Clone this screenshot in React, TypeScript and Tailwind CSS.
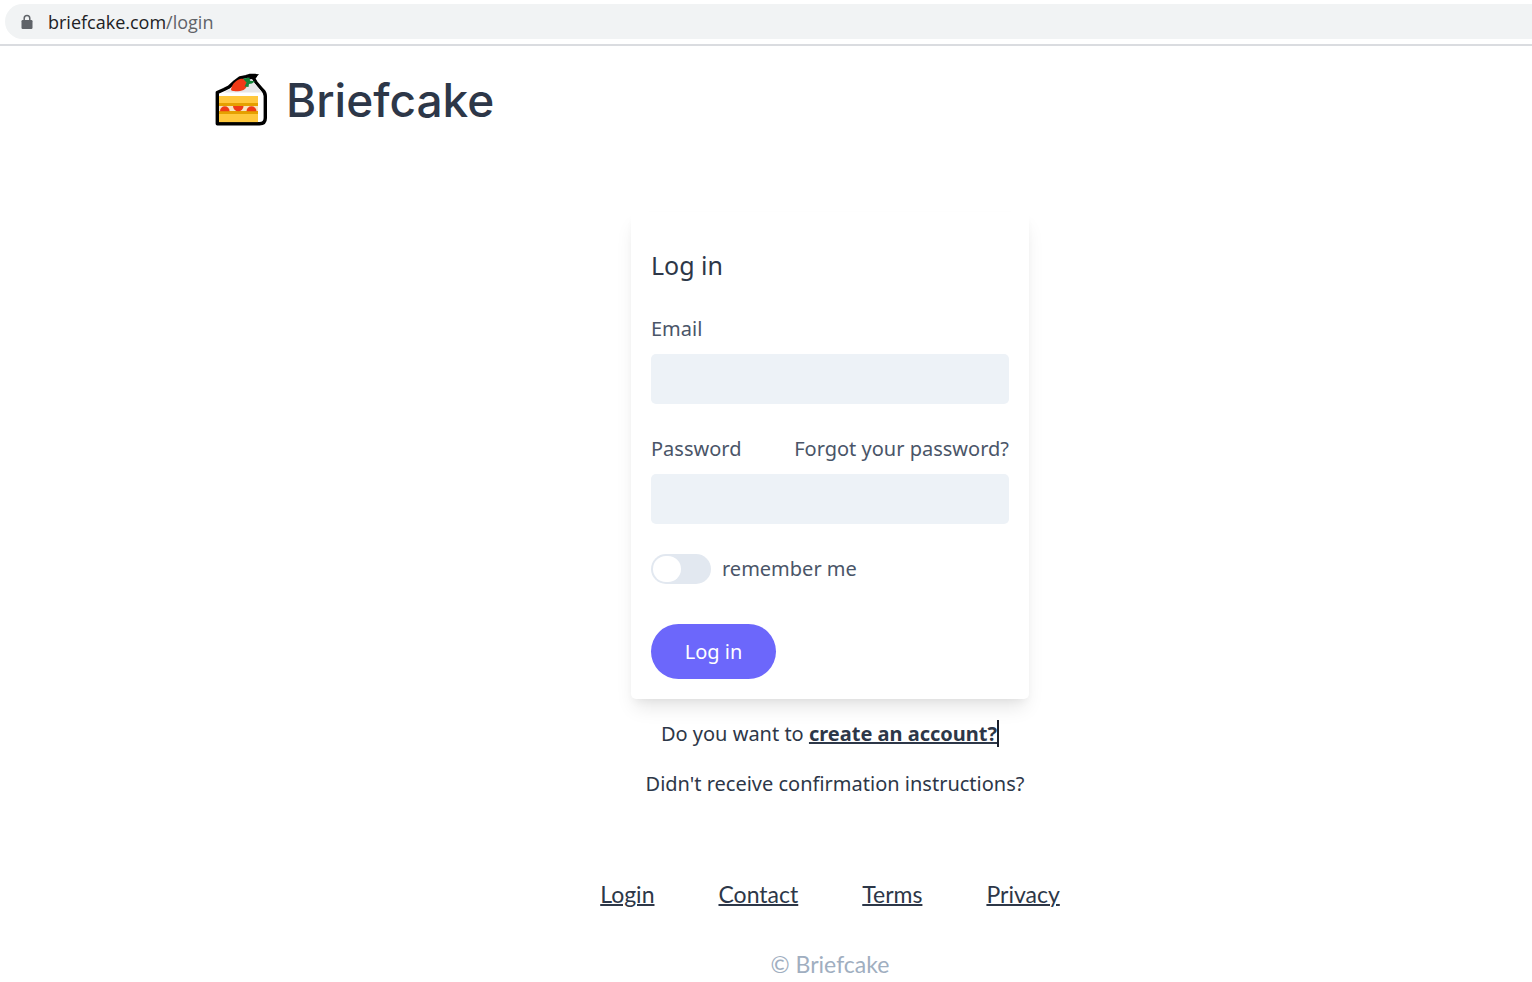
import { useState } from "react";

const footerLinks = ["Login", "Contact", "Terms", "Privacy"];

function LockIcon() {
  return (
    <svg width="12" height="16" viewBox="0 0 12 16" aria-hidden="true">
      <path d="M3.2 7V4.4a2.8 2.8 0 0 1 5.6 0V7" fill="none" stroke="#5f6368" strokeWidth="1.5" />
      <rect x="0.5" y="6" width="11" height="9" rx="1.2" fill="#5f6368" />
    </svg>
  );
}

function CakeIcon() {
  return (
    <svg width="54" height="54" viewBox="0 0 54 54" aria-hidden="true">
      <path
        d="M2.3 19.5L9 16.5 14 14 20 8.5 25 4.8 31 3.6 34.5 2.5H40.5L38.5 5.5 41 9.5 47.5 17Q50.3 19.5 50.3 23V45Q50.3 50.8 44.5 50.8H2.3Z"
        fill="#fff"
        stroke="#000"
        strokeWidth="3.4"
        strokeLinejoin="round"
      />
      <path d="M32 2.2L44 1L39.5 6.5H34Z" fill="#000" />
      <path d="M9 19.5L15 16L22 10L37 6L39.5 10L47 19.5Z" fill="#e6e6e8" />
      <path d="M16 16.5C16.5 12.5 20 7.5 25 6C29 5 32 7.5 32.2 11C32.2 15 29 18 23 18.2C19 18.2 16 18.2 16 16.5Z" fill="#f03a17" />
      <path d="M28 5.8L34.5 4.5L35 7.8L40 8.2L37 10.5L34 11L33.5 14L29.5 13.5L31.5 9.5Z" fill="#16853a" />
      <rect x="4" y="23" width="39" height="26.1" fill="#ffc83d" />
      <path d="M4 30H43V33H4Z" fill="#e5a000" />
      <path d="M4 33H43V38.2H4Z" fill="#f8e3bd" />
      <path d="M4 38H43V41H4Z" fill="#e5a000" />
      <path d="M5 38.3A4.8 5 0 0 1 14.6 38.3Z" fill="#f03a17" />
      <path d="M18 33H28.5A5.25 5.2 0 0 1 18 33Z" fill="#f03a17" />
      <path d="M31.5 38.3A5 5 0 0 1 41.5 38.3Z" fill="#f03a17" />
    </svg>
  );
}

export default function App() {
  const [remember, setRemember] = useState(false);

  return (
    <div className="overflow-hidden bg-white font-['Noto_Sans',sans-serif] text-xl leading-[30px] text-[#2d3748]">
      <div className="border-b-2 border-[#dadce0] pt-1 pb-[5px] pl-[5px]">
        <div className="flex h-[35px] items-center gap-[15px] rounded-l-full bg-[#f1f3f4] pl-4 font-['Open_Sans',sans-serif] text-lg">
          <LockIcon />
          <span className="text-[#5f6368]">
            <span className="text-[#202124]">briefcake.com</span>/login
          </span>
        </div>
      </div>

      <div className="pl-32">
        <header className="mx-auto flex max-w-[1250px] px-[10px] pt-[27px]">
          <a href="#" className="flex items-center gap-[17px]">
            <CakeIcon />
            <span className="font-['Inter',sans-serif] text-[46px] leading-[54px] font-medium">Briefcake</span>
          </a>
        </header>

        <main className="mt-[85px] flex flex-col items-center">
          <form
            className="w-[398px] max-w-full rounded-[5px] bg-white p-5 shadow-[0_12px_19px_-4px_rgba(0,0,0,0.1),0_5px_8px_-3px_rgba(0,0,0,0.05)]"
            onSubmit={(e) => e.preventDefault()}
          >
            <h1 className="pt-[15px] text-[25px] leading-[37px]">Log in</h1>
            <div className="mt-[30px] text-[#4a5568]">
              <label htmlFor="email" className="block">Email</label>
              <input id="email" type="email" className="mt-[10px] block h-[50px] w-full rounded-[5px] bg-[#edf2f7] px-4" />
            </div>
            <div className="mt-[30px] text-[#4a5568]">
              <div className="flex justify-between">
                <label htmlFor="password">Password</label>
                <a href="#">Forgot your password?</a>
              </div>
              <input id="password" type="password" className="mt-[10px] block h-[50px] w-full rounded-[5px] bg-[#edf2f7] px-4" />
            </div>
            <label className="mt-[30px] flex items-center gap-[11px] text-[#4a5568]">
              <input
                type="checkbox"
                checked={remember}
                onChange={(e) => setRemember(e.target.checked)}
                className="h-[30px] w-[60px] appearance-none rounded-full bg-[#e2e8f0] p-0.5 before:block before:h-[26px] before:w-7 before:rounded-full before:bg-white checked:bg-[#6c67fb] checked:before:ml-auto"
              />
              remember me
            </label>
            <button type="submit" className="mt-10 block h-[55px] w-[125px] rounded-full bg-[#6c67fb] text-white">
              Log in
            </button>
          </form>
          <p className="mt-5">
            Do you want to{" "}
            <a href="#" className="border-r-2 border-[#1a202c] font-bold underline decoration-2">create an account?</a>
          </p>
          <a href="#" className="mt-5 pl-[10px]">Didn't receive confirmation instructions?</a>
        </main>

        <footer className="mt-20 flex flex-col items-center pb-2 font-['Lato',sans-serif] text-[23px]">
          <nav className="flex gap-16">
            {footerLinks.map((name) => (
              <a key={name} href="#" className="underline decoration-2">{name}</a>
            ))}
          </nav>
          <p className="mt-10 text-[#a0aec0]">© Briefcake</p>
        </footer>
      </div>
    </div>
  );
}
